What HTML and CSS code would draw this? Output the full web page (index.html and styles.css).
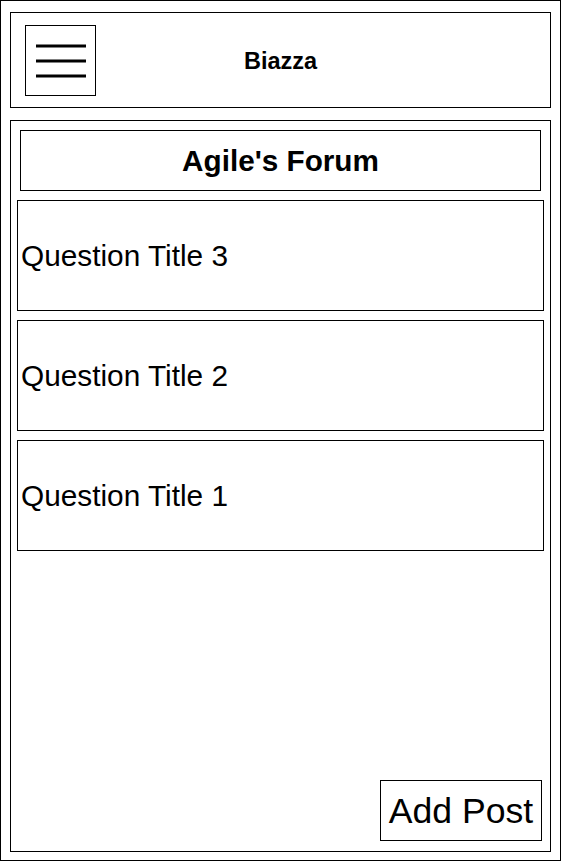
FILE: index.html
```html
<!DOCTYPE html>
<html>
<head>
<meta charset="utf-8">
<link rel="stylesheet" href="styles.css">
</head>
<body>
<div class="frame">
  <header class="topbar">
    <div class="menu-btn">
      <svg width="69" height="69" viewBox="0 0 69 69">
        <rect x="10" y="18.5" width="50" height="3" fill="#000"/>
        <rect x="10" y="33.5" width="50" height="3" fill="#000"/>
        <rect x="10" y="48.5" width="50" height="3" fill="#000"/>
      </svg>
    </div>
    <div class="brand">Biazza</div>
    <div></div>
  </header>
  <main class="forum">
    <h1 class="forum-title">Agile's Forum</h1>
    <div class="question">Question Title 3</div>
    <div class="question">Question Title 2</div>
    <div class="question">Question Title 1</div>
    <button class="add-post">Add Post</button>
  </main>
</div>
</body>
</html>
```

FILE: styles.css
```css
html, body {
  margin: 0;
  padding: 0;
  background: #fff;
}
body {
  font-family: "Liberation Sans", Arial, Helvetica, sans-serif;
  color: #000;
}
.frame {
  box-sizing: border-box;
  width: 561px;
  height: 861px;
  border: 1px solid #000;
  padding: 11px 9px 8px 9px;
  display: flex;
  flex-direction: column;
  gap: 12px;
}
.topbar {
  box-sizing: border-box;
  height: 96px;
  border: 1px solid #000;
  display: grid;
  grid-template-columns: 1fr auto 1fr;
  align-items: center;
  padding-left: 14px;
}
.menu-btn {
  width: 69px;
  height: 69px;
  border: 1px solid #000;
  justify-self: start;
}
.menu-btn svg {
  display: block;
}
.brand {
  font-weight: bold;
  font-size: 23.5px;
  margin-left: -14px;
  margin-top: 3px;
}
.forum {
  flex: 1;
  box-sizing: border-box;
  border: 1px solid #000;
  padding: 9px 9px 10px 9px;
  display: flex;
  flex-direction: column;
  gap: 9px;
}
.forum-title {
  margin: 0;
  box-sizing: border-box;
  height: 61px;
  border: 1px solid #000;
  display: flex;
  align-items: center;
  justify-content: center;
  font-size: 29.7px;
  font-weight: bold;
  padding-top: 0;
}
.question {
  box-sizing: border-box;
  height: 111px;
  margin: 0 -3px;
  border: 1px solid #000;
  display: flex;
  align-items: center;
  padding-left: 3px;
  padding-top: 0;
  font-size: 29.8px;
}
.add-post {
  margin-top: auto;
  align-self: flex-end;
  margin-right: -1px;
  box-sizing: border-box;
  width: 162px;
  height: 61px;
  border: 1px solid #000;
  background: #fff;
  font-family: "Liberation Sans", Arial, Helvetica, sans-serif;
  font-size: 35.6px;
  color: #000;
  padding: 2px 0 0 0;
}
```
